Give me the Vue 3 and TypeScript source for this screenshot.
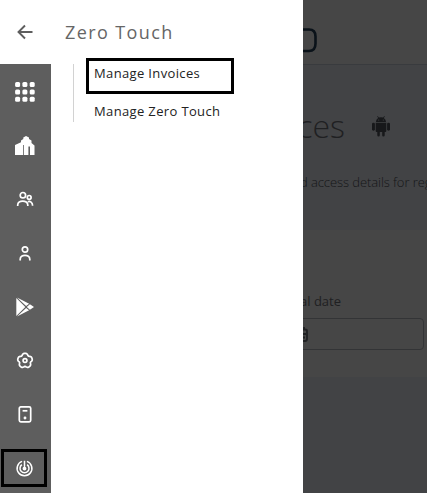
<script setup lang="ts">
import { ref } from 'vue'

const links = ['Manage Invoices', 'Manage Zero Touch']
const active = ref('Manage Invoices')
const items = ['apps', 'company', 'users', 'user', 'play', 'settings', 'device', 'zero']
const dots = [2.6, 9.9, 17.2]

// Outline of the five-lobed gear, sampled around its centre
const gear = Array.from({ length: 60 }, (_, i) => {
  const a = (i / 60) * Math.PI * 2
  const r = 6.75 + 0.85 * Math.cos(5 * a) - 0.22 * Math.cos(10 * a)
  return `${(10 + r * Math.sin(a)).toFixed(2)},${(10.7 - r * Math.cos(a)).toFixed(2)}`
}).join(' ')
</script>

<template>
  <div class="screen">
    <aside class="drawer">
      <header class="drawer-head">
        <button class="back" aria-label="Back">
          <svg width="17" height="16" viewBox="0 0 17 16"><path d="M15.5 8H2M8 1.5L1.5 8L8 14.5" /></svg>
        </button>
        <h2>Zero Touch</h2>
      </header>
      <div class="drawer-body">
        <nav class="rail">
          <a v-for="item in items" :key="item" class="rail-item" :class="{ selected: item === 'zero' }">
            <svg v-if="item === 'apps'" class="solid" width="20" height="20" viewBox="0 0 20 20">
              <template v-for="y in dots" :key="y">
                <rect v-for="x in dots" :key="x" :x="x - 2.5" :y="y - 2.5" width="5" height="5" rx="1.5" />
              </template>
            </svg>
            <svg v-else-if="item === 'company'" class="solid" width="20" height="20" viewBox="0 0 20 20">
              <path d="M0 19V9L6 6.3V4.5L8.3 3V1.5L11 0L14 1.5V3L16.5 4.5V7L19.5 9.5V19H15V10.5H13.4V19H8.8V9H8V19Z" />
            </svg>
            <svg v-else-if="item === 'users'" class="line" width="20" height="20" viewBox="0 0 20 20">
              <circle cx="7.9" cy="6.2" r="2.7" /><circle cx="14.2" cy="8.4" r="1.9" />
              <path d="M2.7 16.9V16.1C2.7 10.7 12.8 10.7 12.8 16.1V16.9M12.8 12.7C15.2 11.9 17.6 13.2 17.6 16.7" />
            </svg>
            <svg v-else-if="item === 'user'" class="line" width="20" height="20" viewBox="0 0 20 20">
              <circle cx="10" cy="6.5" r="2.7" />
              <path d="M5.2 17.5V16.2C5.2 11 14.8 11 14.8 16.2V17.5" />
            </svg>
            <svg v-else-if="item === 'play'" class="solid" width="20" height="20" viewBox="0 0 20 20">
              <path d="M1.3 1L10.3 10L1.3 19Z" />
              <path d="M2 .5L14.1 6.8L11.1 9.1ZM2 19.5L14.1 13.2L11.1 10.9ZM14.9 7.3L19 10L14.9 12.7L11.8 10Z" />
            </svg>
            <svg v-else-if="item === 'settings'" class="line" width="20" height="20" viewBox="0 0 20 20">
              <circle cx="10" cy="10.6" r="1.9" />
              <polygon :points="gear" />
            </svg>
            <svg v-else-if="item === 'device'" class="line" width="20" height="20" viewBox="0 0 20 20">
              <rect x="4.3" y="2.8" width="11.4" height="15" rx="1.5" /><path d="M7.6 6.8H12.4" />
              <circle class="fill" cx="10" cy="14" r=".6" />
            </svg>
            <svg v-else class="line thin" width="20" height="20" viewBox="0 0 20 20">
              <path d="M10.5 10.5V2.8M12.9 3.4A7.4 7.4 0 1 1 8.1 3.4M13.1 6.7A4.5 4.5 0 1 1 7.9 6.7" />
              <circle class="fill" cx="10.5" cy="10.6" r="1.2" />
            </svg>
          </a>
        </nav>
        <ul class="links">
          <li v-for="link in links" :key="link" :class="{ marked: link === active }" @click="active = link">{{ link }}</li>
        </ul>
      </div>
    </aside>
    <main class="page">
      <header class="top">
        <svg width="20" height="30" viewBox="0 0 20 30"><path d="M-8 4.5H7Q13.5 4.5 13.5 11.5V18.5Q13.5 26 7 26H-8" /></svg>
      </header>
      <section class="hero">
        <div class="title-row">
          <h1>ces</h1>
          <svg width="18" height="21" viewBox="0 0 18 21">
            <path d="M4 6C4 3.8 5 2.6 6.2 1.9L5.2.4L5.7.1L6.8 1.6Q9 .9 11.2 1.6L12.3.1L12.8.4L11.8 1.9Q14 3.2 14 6Z" />
            <rect x="0" y="6.7" width="2.9" height="8" rx="1.4" /><rect x="15.1" y="6.7" width="2.9" height="8" rx="1.4" />
            <path d="M3.7 6.8H14.3V15Q14.3 16 13.3 16H12.7V19.2Q12.7 20.5 11.4 20.5T10.2 19.2V16H7.8V19.2Q7.8 20.5 6.6 20.5T5.3 19.2V16H4.7Q3.7 16 3.7 15Z" />
            <circle class="eye" cx="6.7" cy="4" r=".6" /><circle class="eye" cx="11.3" cy="4" r=".6" />
          </svg>
        </div>
        <p>d access details for reg</p>
      </section>
      <section class="card">
        <label>al date</label>
        <div class="date">
          <svg width="14" height="17" viewBox="0 0 14 17"><path d="M1 3.5H11Q13 3.5 13 5V13Q13 15 11 15H1M0 8H12M10 1V4M8 11.5H11" /></svg>
        </div>
      </section>
    </main>
  </div>
</template>

<style>
body { margin: 0; overflow: hidden; }
</style>

<style scoped>
* { box-sizing: border-box; }
.screen { display: flex; width: 427px; height: 493px; overflow: hidden; font-family: "Open Sans", sans-serif; background: #424345; }
.drawer { display: flex; flex-direction: column; flex: 0 0 303px; background: #fff; }
.drawer-head { display: flex; align-items: center; height: 64px; padding-left: 17px; }
.back { display: flex; padding: 0; border: 0; background: none; }
.back path { fill: none; stroke: #5e5e5e; stroke-width: 1.9; }
h2 { margin: 0 0 0 31px; font-size: 18px; line-height: 24px; font-weight: 400; letter-spacing: 1.4px; color: #666; }
.drawer-body { display: flex; flex: 1; align-items: flex-start; }
.rail { display: flex; flex-direction: column; width: 51px; height: 429px; padding-top: 1px; background: #5e5e5e; }
.rail-item { display: flex; align-items: center; justify-content: center; flex: 0 0 53.7px; width: 50px; }
.rail-item.selected { flex-basis: 38px; width: 46px; margin: 8px 0 0 1px; border: 3px solid #000; }
.solid { fill: #fff; }
.line { margin-right: 1px; fill: none; stroke: #fff; stroke-width: 1.7; stroke-linejoin: round; }
.thin { stroke-width: 1.5; }
.fill { fill: #fff; }
.links { display: flex; flex-direction: column; height: 58px; margin: 0 0 0 22px; padding: 0; border-left: 1px solid #d2d2d2; list-style: none; font-size: 13px; line-height: 18px; letter-spacing: .36px; color: #222; }
.links li { flex: none; width: 148px; height: 36px; margin-left: 12px; padding: 8px; white-space: nowrap; }
.links li:first-child { margin-top: -6px; }
.links .marked { padding: 3px 5px; border: 3px solid #000; }
.page { flex: 1; min-width: 0; overflow: hidden; color: #1f2022; }
.top { display: flex; height: 65px; padding-top: 25px; background: #464646; border-bottom: 1px solid #393b3e; }
.top path { fill: none; stroke: #0a1219; stroke-width: 2.6; }
.top svg { margin-left: -1px; }
.hero { height: 165px; padding-top: 40px; background: #424345; }
.title-row { display: flex; align-items: center; height: 42px; }
h1 { display: flex; justify-content: flex-end; width: 42px; margin: 0; font-size: 32px; line-height: 42px; font-weight: 300; }
.title-row svg { margin-left: 27px; fill: #17181a; }
.title-row .eye { fill: #424345; }
.hero p { margin: 25px 0 0 -3px; font-size: 13px; line-height: 20px; font-weight: 300; letter-spacing: -.08px; white-space: nowrap; color: #151618; }
.card { display: flex; flex-direction: column; height: 147px; padding-top: 61px; background: #464646; }
label { display: flex; justify-content: flex-end; width: 38px; white-space: nowrap; font-size: 13px; line-height: 20px; }
.date { display: flex; align-items: center; width: 131px; height: 32px; margin: 7px 0 0 -10px; border: 1px solid #333436; border-radius: 4px; }
.date path { fill: none; stroke: #202123; stroke-width: 1.8; }
</style>
